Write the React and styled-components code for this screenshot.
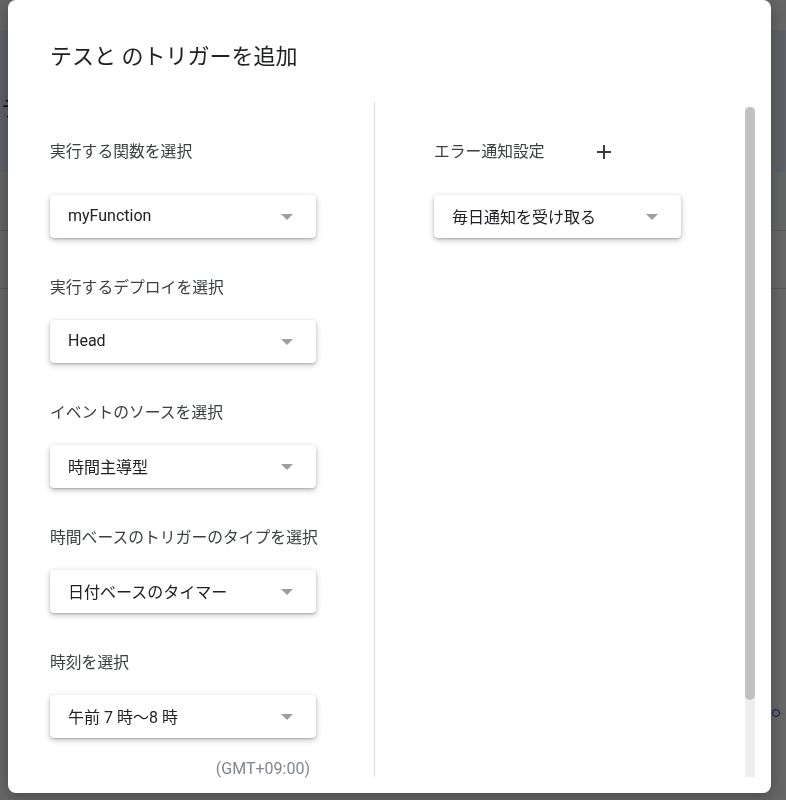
import styled, { createGlobalStyle } from "styled-components"

const GlobalStyle = createGlobalStyle`
    html, body {
        margin: 0;
        padding: 0;
        background: #ffffff;
        font-family: Roboto, "Noto Sans CJK JP", sans-serif;
    }
`

const leftFields = [
    { label: "実行する関数を選択", value: "myFunction" },
    { label: "実行するデプロイを選択", value: "Head" },
    { label: "イベントのソースを選択", value: "時間主導型" },
    { label: "時間ベースのトリガーのタイプを選択", value: "日付ベースのタイマー" },
    { label: "時刻を選択", value: "午前 7 時〜8 時" },
]

const Field = ({ label, value, first }) => (
    <FieldGroup>
        <Label first={first}>{label}</Label>
        <Select>
            <SelectText>{value}</SelectText>
            <Arrow />
        </Select>
    </FieldGroup>
)

const PlusIcon = () => (
    <svg width="14" height="14" viewBox="0 0 14 14">
        <path d="M7 0v14M0 7h14" stroke="#3c4043" strokeWidth="2" fill="none" />
    </svg>
)

export default function App() {
    return (
        <>
            <GlobalStyle />
            <Page>
                <TopStrip />
                <HeaderBand>
                    <PageTitle>テスト</PageTitle>
                </HeaderBand>
                <ToolRow />
                <ListRow />
                <StatusDot />
            </Page>

            <Scrim>
                <Dialog>
                    <Title>テスと のトリガーを追加</Title>
                    <Body>
                        <Column width={266}>
                            {leftFields.map((f, i) => (
                                <Field key={i} label={f.label} value={f.value} first={i === 0} />
                            ))}
                            <TimeZone>(GMT+09:00)</TimeZone>
                        </Column>
                        <Divider />
                        <Column width={247} gapLeft={59}>
                            <FieldGroup>
                                <HeaderRow>
                                    <Label first>エラー通知設定</Label>
                                    <PlusButton><PlusIcon /></PlusButton>
                                </HeaderRow>
                                <Select>
                                    <SelectText>毎日通知を受け取る</SelectText>
                                    <Arrow />
                                </Select>
                            </FieldGroup>
                        </Column>
                        <Spacer />
                        <ScrollTrack>
                            <ScrollThumb />
                        </ScrollTrack>
                    </Body>
                </Dialog>
            </Scrim>
        </>
    )
}

const Page = styled.div`
    min-height: 800px;
    background: #ffffff;
`
const TopStrip = styled.div`
    height: 30px;
    background: #fdfdfd;
`
const HeaderBand = styled.div`
    height: 142px;
    background: #e8f0fe;
    display: flex;
    align-items: center;
`
const PageTitle = styled.div`
    font-size: 22px;
    color: #1a3a8a;
    padding-left: 1px;
    margin-top: 10px;
`
const ToolRow = styled.div`
    height: 58px;
    background: #f8f9fa;
    border-bottom: 1px solid #dadce0;
`
const ListRow = styled.div`
    height: 57px;
    border-bottom: 1px solid #dadce0;
`
const StatusDot = styled.div`
    width: 6px;
    height: 6px;
    border: 1px solid #1a3a8a;
    border-radius: 50%;
    margin: 420px 0 0 772px;
`
const Scrim = styled.div`
    position: fixed;
    inset: 0;
    background: rgba(0, 0, 0, 0.6);
`
const Dialog = styled.div`
    position: absolute;
    left: 8px;
    top: 0;
    width: 763px;
    height: 793px;
    box-sizing: border-box;
    background: #ffffff;
    border-radius: 8px;
    box-shadow: 0 4px 16px rgba(0, 0, 0, 0.3);
    padding: 0 16px 16px 42px;
    display: flex;
    flex-direction: column;
`
const Title = styled.h2`
    margin: 41px 0 0;
    height: 61px;
    line-height: 32px;
    font-size: 22px;
    font-weight: 400;
    color: #202124;
`
const Body = styled.div`
    flex: 1;
    display: flex;
    min-height: 0;
`
const Column = styled.div`
    width: ${p => p.width}px;
    margin-left: ${p => p.gapLeft || 0}px;
    padding-top: 38px;
    display: flex;
    flex-direction: column;
    gap: 38px;
`
const Divider = styled.div`
    width: 1px;
    background: #dadce0;
    margin-left: 58px;
`
const FieldGroup = styled.div`
    display: flex;
    flex-direction: column;
`
const HeaderRow = styled.div`
    display: grid;
    grid-template-columns: 158px 24px;
    align-items: start;
`
const Label = styled.div`
    font-size: 15.8px;
    line-height: 24px;
    color: #3c4043;
    margin-bottom: ${p => (p.first ? 31 : 20)}px;
    white-space: nowrap;
`
const PlusButton = styled.div`
    width: 24px;
    height: 24px;
    display: flex;
    align-items: center;
    justify-content: center;
`
const Select = styled.div`
    height: 43px;
    box-sizing: border-box;
    border-radius: 4px;
    background: #ffffff;
    box-shadow: 0 1px 2px rgba(0, 0, 0, 0.2), 0 2px 6px rgba(0, 0, 0, 0.24);
    display: flex;
    align-items: center;
    justify-content: space-between;
    padding: 0 23px 2px 18px;
`
const SelectText = styled.span`
    font-size: 16px;
    color: #202124;
    white-space: nowrap;
`
const Arrow = styled.span`
    width: 0;
    height: 0;
    margin-top: 2px;
    border-left: 6px solid transparent;
    border-right: 6px solid transparent;
    border-top: 6px solid #9e9e9e;
`
const TimeZone = styled.div`
    margin-top: -19px;
    text-align: right;
    padding-right: 6px;
    font-size: 16px;
    line-height: 24px;
    color: #80868b;
`
const Spacer = styled.div`
    flex: 1;
`
const ScrollTrack = styled.div`
    width: 10px;
    margin-top: 5px;
    background: #eeeeee;
    display: flex;
    flex-direction: column;
`
const ScrollThumb = styled.div`
    height: 593px;
    background: #c1c1c1;
    border-radius: 5px;
`
